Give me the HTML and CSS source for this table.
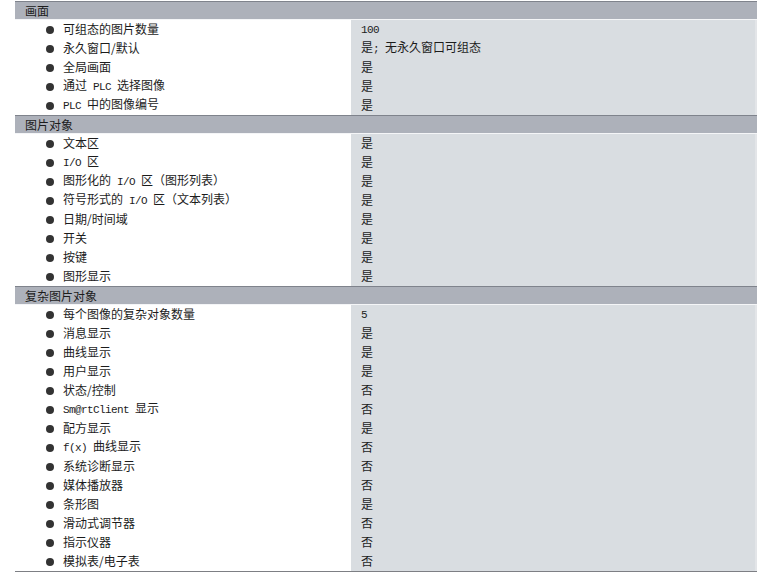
FILE: index.html
```html
<!DOCTYPE html>
<html lang="zh-CN">
<head>
<meta charset="utf-8">
<title>画面</title>
<link rel="stylesheet" href="styles.css">
</head>
<body>
<div class="table">
  <div class="sec"><span class="sec-title">画面</span></div>
  <div class="lbl"><i class="dot"></i><span class="t">可组态的图片数量</span></div><div class="val"><span class="t"><span class="m">100</span></span></div>
  <div class="lbl"><i class="dot"></i><span class="t">永久窗口/默认</span></div><div class="val"><span class="t">是<span class="m">; </span>无永久窗口可组态</span></div>
  <div class="lbl"><i class="dot"></i><span class="t">全局画面</span></div><div class="val"><span class="t">是</span></div>
  <div class="lbl"><i class="dot"></i><span class="t">通过<span class="m"> PLC </span>选择图像</span></div><div class="val"><span class="t">是</span></div>
  <div class="lbl"><i class="dot"></i><span class="t"><span class="m">PLC </span>中的图像编号</span></div><div class="val"><span class="t">是</span></div>

  <div class="sec"><span class="sec-title">图片对象</span></div>
  <div class="lbl"><i class="dot"></i><span class="t">文本区</span></div><div class="val"><span class="t">是</span></div>
  <div class="lbl"><i class="dot"></i><span class="t"><span class="m">I/O </span>区</span></div><div class="val"><span class="t">是</span></div>
  <div class="lbl"><i class="dot"></i><span class="t">图形化的<span class="m"> I/O </span>区（图形列表）</span></div><div class="val"><span class="t">是</span></div>
  <div class="lbl"><i class="dot"></i><span class="t">符号形式的<span class="m"> I/O </span>区（文本列表）</span></div><div class="val"><span class="t">是</span></div>
  <div class="lbl"><i class="dot"></i><span class="t">日期/时间域</span></div><div class="val"><span class="t">是</span></div>
  <div class="lbl"><i class="dot"></i><span class="t">开关</span></div><div class="val"><span class="t">是</span></div>
  <div class="lbl"><i class="dot"></i><span class="t">按键</span></div><div class="val"><span class="t">是</span></div>
  <div class="lbl"><i class="dot"></i><span class="t">图形显示</span></div><div class="val"><span class="t">是</span></div>

  <div class="sec"><span class="sec-title">复杂图片对象</span></div>
  <div class="lbl"><i class="dot"></i><span class="t">每个图像的复杂对象数量</span></div><div class="val"><span class="t"><span class="m">5</span></span></div>
  <div class="lbl"><i class="dot"></i><span class="t">消息显示</span></div><div class="val"><span class="t">是</span></div>
  <div class="lbl"><i class="dot"></i><span class="t">曲线显示</span></div><div class="val"><span class="t">是</span></div>
  <div class="lbl"><i class="dot"></i><span class="t">用户显示</span></div><div class="val"><span class="t">是</span></div>
  <div class="lbl"><i class="dot"></i><span class="t">状态/控制</span></div><div class="val"><span class="t">否</span></div>
  <div class="lbl"><i class="dot"></i><span class="t"><span class="m">Sm@rtClient </span>显示</span></div><div class="val"><span class="t">否</span></div>
  <div class="lbl"><i class="dot"></i><span class="t">配方显示</span></div><div class="val"><span class="t">是</span></div>
  <div class="lbl"><i class="dot"></i><span class="t"><span class="m">f(x) </span>曲线显示</span></div><div class="val"><span class="t">否</span></div>
  <div class="lbl"><i class="dot"></i><span class="t">系统诊断显示</span></div><div class="val"><span class="t">否</span></div>
  <div class="lbl"><i class="dot"></i><span class="t">媒体播放器</span></div><div class="val"><span class="t">否</span></div>
  <div class="lbl"><i class="dot"></i><span class="t">条形图</span></div><div class="val"><span class="t">是</span></div>
  <div class="lbl"><i class="dot"></i><span class="t">滑动式调节器</span></div><div class="val"><span class="t">否</span></div>
  <div class="lbl"><i class="dot"></i><span class="t">指示仪器</span></div><div class="val"><span class="t">否</span></div>
  <div class="lbl"><i class="dot"></i><span class="t">模拟表/电子表</span></div><div class="val"><span class="t">否</span></div>
</div>
</body>
</html>
```

FILE: styles.css
```css
html, body {
  margin: 0;
  padding: 0;
  background: #ffffff;
}

body {
  font-family: "Noto Sans CJK SC", "Noto Sans", sans-serif;
  font-size: 12px;
  color: #1c1c1c;
}

.table {
  margin: 1px 0 0 15px;
  width: 742px;
  display: grid;
  grid-template-columns: 336px 406px;
  grid-auto-rows: 19px;
  border-bottom: 1px solid #7d7f84;
}

.sec {
  grid-column: 1 / span 2;
  background: #adb1ba;
  border-top: 1px solid #7f838c;
  border-bottom: 1px solid #f4f5f7;
  display: flex;
  align-items: center;
  padding-left: 10px;
  box-sizing: border-box;
}

.sec-title {
  line-height: 17px;
}

.t {
  line-height: 18px;
  white-space: nowrap;
}

.lbl {
  display: flex;
  align-items: center;
  padding-left: 31px;
  padding-bottom: 1px;
  background: #ffffff;
}

.dot {
  display: inline-block;
  width: 8px;
  height: 8px;
  border-radius: 50%;
  background: #333333;
  margin-right: 9px;
  margin-top: 1px;
  flex: none;
}

.val {
  display: flex;
  align-items: center;
  padding-left: 10px;
  padding-bottom: 1px;
  background: #d9dde1;
  border-right: 2px solid #e3e5e8;
}

.m {
  font-family: "Liberation Mono", "DejaVu Sans Mono", monospace;
  font-size: 11px;
  letter-spacing: -0.6px;
  white-space: pre;
}
```
